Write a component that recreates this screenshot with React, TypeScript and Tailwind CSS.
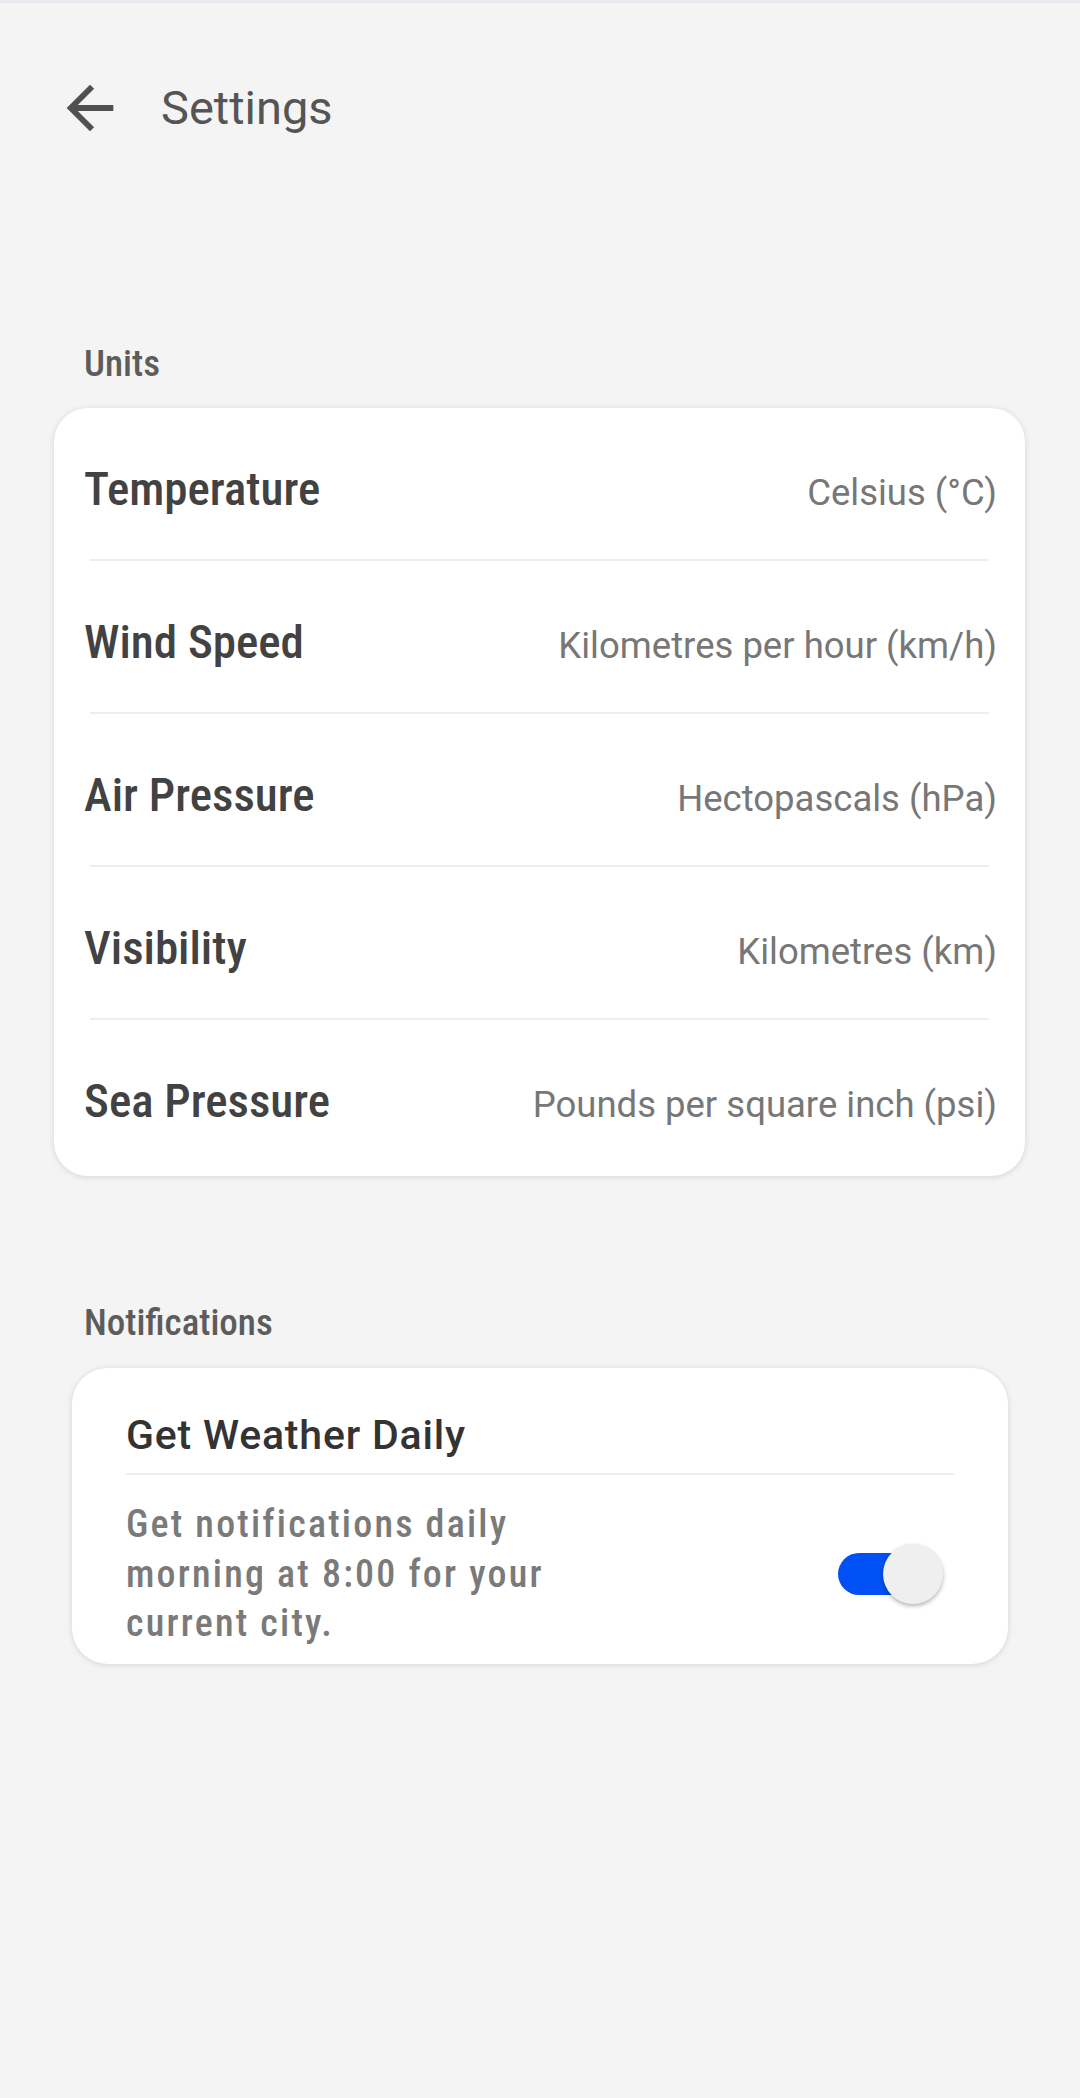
import { useState } from "react";

const cond = "font-['Roboto_Condensed','Liberation_Sans_Narrow','DejaVu_Sans_Condensed',Roboto,sans-serif]";
const roboto = "font-['Roboto','Liberation_Sans',sans-serif]";

const units = [
  { label: "Temperature", value: "Celsius (°C)" },
  { label: "Wind Speed", value: "Kilometres per hour (km/h)" },
  { label: "Air Pressure", value: "Hectopascals (hPa)" },
  { label: "Visibility", value: "Kilometres (km)" },
  { label: "Sea Pressure", value: "Pounds per square inch (psi)" },
];

export default function App() {
  const [daily, setDaily] = useState(true);

  return (
    <div className="min-h-[2098px] w-full bg-[#f4f4f4]">
      <div className="h-[3px] bg-[#ece7ef]" />

      {/* header */}
      <div className="mt-[70px] flex h-[70px] items-center pl-[55px]">
        <svg width="70" height="70" viewBox="0 0 24 24" fill="#505050">
          <path d="M20 11H7.83l5.59-5.59L12 4l-8 8 8 8 1.41-1.41L7.83 13H20v-2z" />
        </svg>
        <h1 className={`${roboto} ml-[36px] -mt-[2px] text-[47px] leading-[47px] text-[#555555]`}>Settings</h1>
      </div>

      {/* units */}
      <p className={`${cond} mt-[202px] pl-[84px] text-[37px] font-medium leading-[37px] text-[#5c5c5c]`}>
        Units
      </p>
      <div className="mt-[26px] ml-[54px] w-[971px] rounded-[34px] bg-white pb-[5px] shadow-[0_1px_6px_rgba(0,0,0,0.13)]">
        {units.map((u, i) => (
          <div key={u.label}>
            <div className="flex h-[151px] items-center pt-[10px] pl-[30px] pr-[28px]">
              <div className="flex w-full items-baseline justify-between">
                <span className={`${cond} text-[47px] font-medium leading-[47px] text-[#424242]`}>{u.label}</span>
                <span className={`${roboto} text-[36.5px] leading-[37px] text-[#777777]`}>{u.value}</span>
              </div>
            </div>
            {i < units.length - 1 && <div className="mx-[36px] h-[2px] bg-[#eeeeee]" />}
          </div>
        ))}
      </div>

      {/* notifications */}
      <p className={`${cond} mt-[128px] pl-[84px] text-[37px] font-medium leading-[37px] text-[#5c5c5c]`}>
        Notifications
      </p>
      <div className="mt-[27px] ml-[72px] w-[936px] rounded-[36px] bg-white pt-[47px] pb-[15px] pl-[54px] pr-[54px] shadow-[0_1px_6px_rgba(0,0,0,0.13)]">
        <h2 className={`${roboto} text-[41px] font-[460] leading-[41px] tracking-[0.8px] text-[#333333]`}>
          Get Weather Daily
        </h2>
        <div className="mt-[17px] h-[2px] bg-[#eeeeee]" />
        <div className="mt-[25px] flex items-center justify-between">
          <p className={`${cond} w-[470px] text-[38px] font-medium leading-[49.5px] tracking-[2.2px] text-[#7a7a7a]`}>
            Get notifications daily morning at 8:00 for your current city.
          </p>
          <button
            onClick={() => setDaily(!daily)}
            className="relative mr-[10px] h-[60px] w-[106px]"
          >
            <span
              className={`absolute left-[0px] top-[9px] h-[42px] w-[84px] rounded-full ${daily ? "bg-[#0050f5]" : "bg-[#bdbdbd]"}`}
            />
            <span
              className={`absolute top-0 h-[60px] w-[60px] rounded-full bg-[#efefef] shadow-[0_2px_4px_rgba(0,0,0,0.3)] ${daily ? "left-[45px]" : "left-[-10px]"}`}
            />
          </button>
        </div>
      </div>
    </div>
  );
}
